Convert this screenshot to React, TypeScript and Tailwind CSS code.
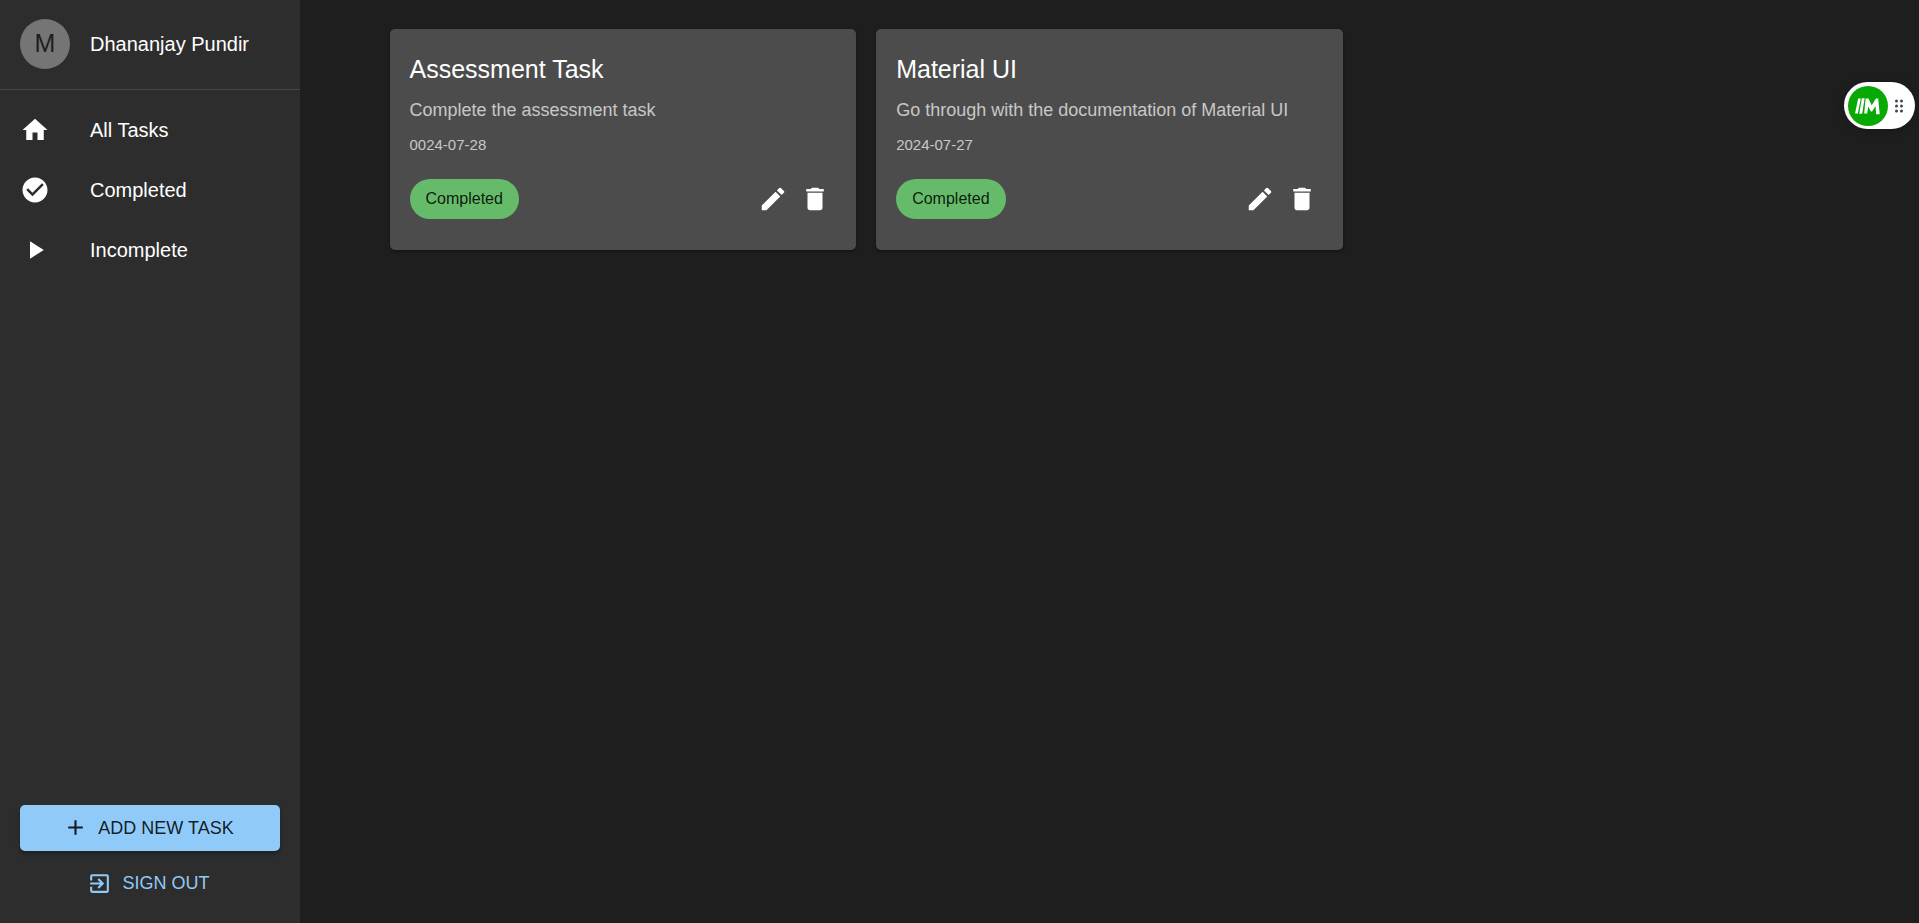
import type { ComponentType } from "react";
import {
  MdAdd,
  MdCheckCircle,
  MdDelete,
  MdEdit,
  MdExitToApp,
  MdHome,
  MdPlayArrow,
} from "react-icons/md";

type Task = { title: string; description: string; date: string; status: string };

const tasks: Task[] = [
  {
    title: "Assessment Task",
    description: "Complete the assessment task",
    date: "0024-07-28",
    status: "Completed",
  },
  {
    title: "Material UI",
    description: "Go through with the documentation of Material UI",
    date: "2024-07-27",
    status: "Completed",
  },
];

const navItems: { label: string; Icon: ComponentType<{ className?: string }> }[] = [
  { label: "All Tasks", Icon: MdHome },
  { label: "Completed", Icon: MdCheckCircle },
  { label: "Incomplete", Icon: MdPlayArrow },
];

function Sidebar() {
  return (
    <aside className="flex w-[300px] shrink-0 flex-col bg-[#2d2d2d]">
      <div className="flex items-center gap-5 border-b border-[#464646] px-5 pt-[19px] pb-5">
        <div className="flex size-[50px] items-center justify-center rounded-full bg-[#757575] text-[25px] text-[#1e1e1e]">
          M
        </div>
        <span className="text-xl leading-[30px]">Dhananjay Pundir</span>
      </div>
      <nav className="py-2.5">
        <ul>
          {navItems.map(({ label, Icon }) => (
            <li key={label}>
              <a href="#" className="flex h-[60px] items-center gap-10 px-5 text-xl">
                <Icon className="size-[30px]" />
                {label}
              </a>
            </li>
          ))}
        </ul>
      </nav>
      <div className="mt-auto flex flex-col gap-2.5 px-5 pb-[17px]">
        <button
          type="button"
          className="flex h-[46px] items-center justify-center gap-2.5 rounded-[5px] bg-[#90caf9] pr-[3px] pb-px text-lg text-black/87 shadow-[0_3px_4px_rgba(0,0,0,0.3)]"
        >
          <MdAdd className="size-[25px]" />
          ADD NEW TASK
        </button>
        <button
          type="button"
          className="flex h-[45px] items-center justify-center gap-2.5 pr-[3px] pb-px text-lg text-[#90caf9]"
        >
          <MdExitToApp className="size-[25px]" />
          SIGN OUT
        </button>
      </div>
    </aside>
  );
}

function TaskCard({ task }: { task: Task }) {
  return (
    <article className="rounded-[5px] bg-[#4c4c4c] px-5 pt-5 pb-[30px] shadow-[0_2px_3px_rgba(0,0,0,0.3)]">
      <h2 className="text-[25px] leading-10">{task.title}</h2>
      <p className="mt-[9px] text-lg leading-[25px] text-white/70">{task.description}</p>
      <p className="mt-[9px] text-[15px] leading-[25px] text-white/70">{task.date}</p>
      <div className="mt-[21px] flex items-center justify-between">
        <span className="flex h-10 items-center rounded-full bg-[#66bb6a] px-4 text-base text-black/87">
          {task.status}
        </span>
        <div className="flex">
          <button type="button" aria-label="Edit task" className="p-1.5">
            <MdEdit className="size-[30px]" />
          </button>
          <button type="button" aria-label="Delete task" className="p-1.5">
            <MdDelete className="size-[30px]" />
          </button>
        </div>
      </div>
    </article>
  );
}

function FloatingBadge() {
  return (
    <button
      type="button"
      aria-label="Open assistant"
      className="fixed top-[82px] right-1 flex h-[47px] w-[71px] items-center gap-[7px] rounded-full bg-white pl-1 shadow-[0_2px_8px_rgba(0,0,0,0.2)]"
    >
      <svg viewBox="0 0 40 40" className="size-10">
        <circle cx="20" cy="20" r="20" fill="#08a904" />
        <g fill="#fff">
          <path d="M10.2 12.4h2.6L9.8 27.6H7z" />
          <path d="M13.8 12.2h2.8l-2.4 15.6h-2.9z" />
          <path d="M17.6 12.6h2.8l3.3 6.6 4.3-6.6h2.2l1.5 15.6h-3.5l-.7-8.2-3.4 5.4h-1.2l-2.7-5-1 7h-3z" />
        </g>
      </svg>
      <svg viewBox="0 0 8 14" className="h-3.5 w-2" fill="#3f4450">
        {[1.5, 6.5].map((x) =>
          [2, 7, 12].map((y) => <circle key={`${x}-${y}`} cx={x} cy={y} r="1.5" />),
        )}
      </svg>
    </button>
  );
}

export default function App() {
  return (
    <div className="flex min-h-screen bg-[#1e1e1e] font-['Liberation_Sans',Arial,sans-serif] text-white">
      <Sidebar />
      <main className="min-w-0 grow">
        <div className="mx-auto grid max-w-[1500px] grid-cols-1 items-start gap-5 px-[30px] pt-[29px] md:grid-cols-2 xl:grid-cols-3">
          {tasks.map((task) => (
            <TaskCard key={task.title} task={task} />
          ))}
        </div>
      </main>
      <FloatingBadge />
    </div>
  );
}
